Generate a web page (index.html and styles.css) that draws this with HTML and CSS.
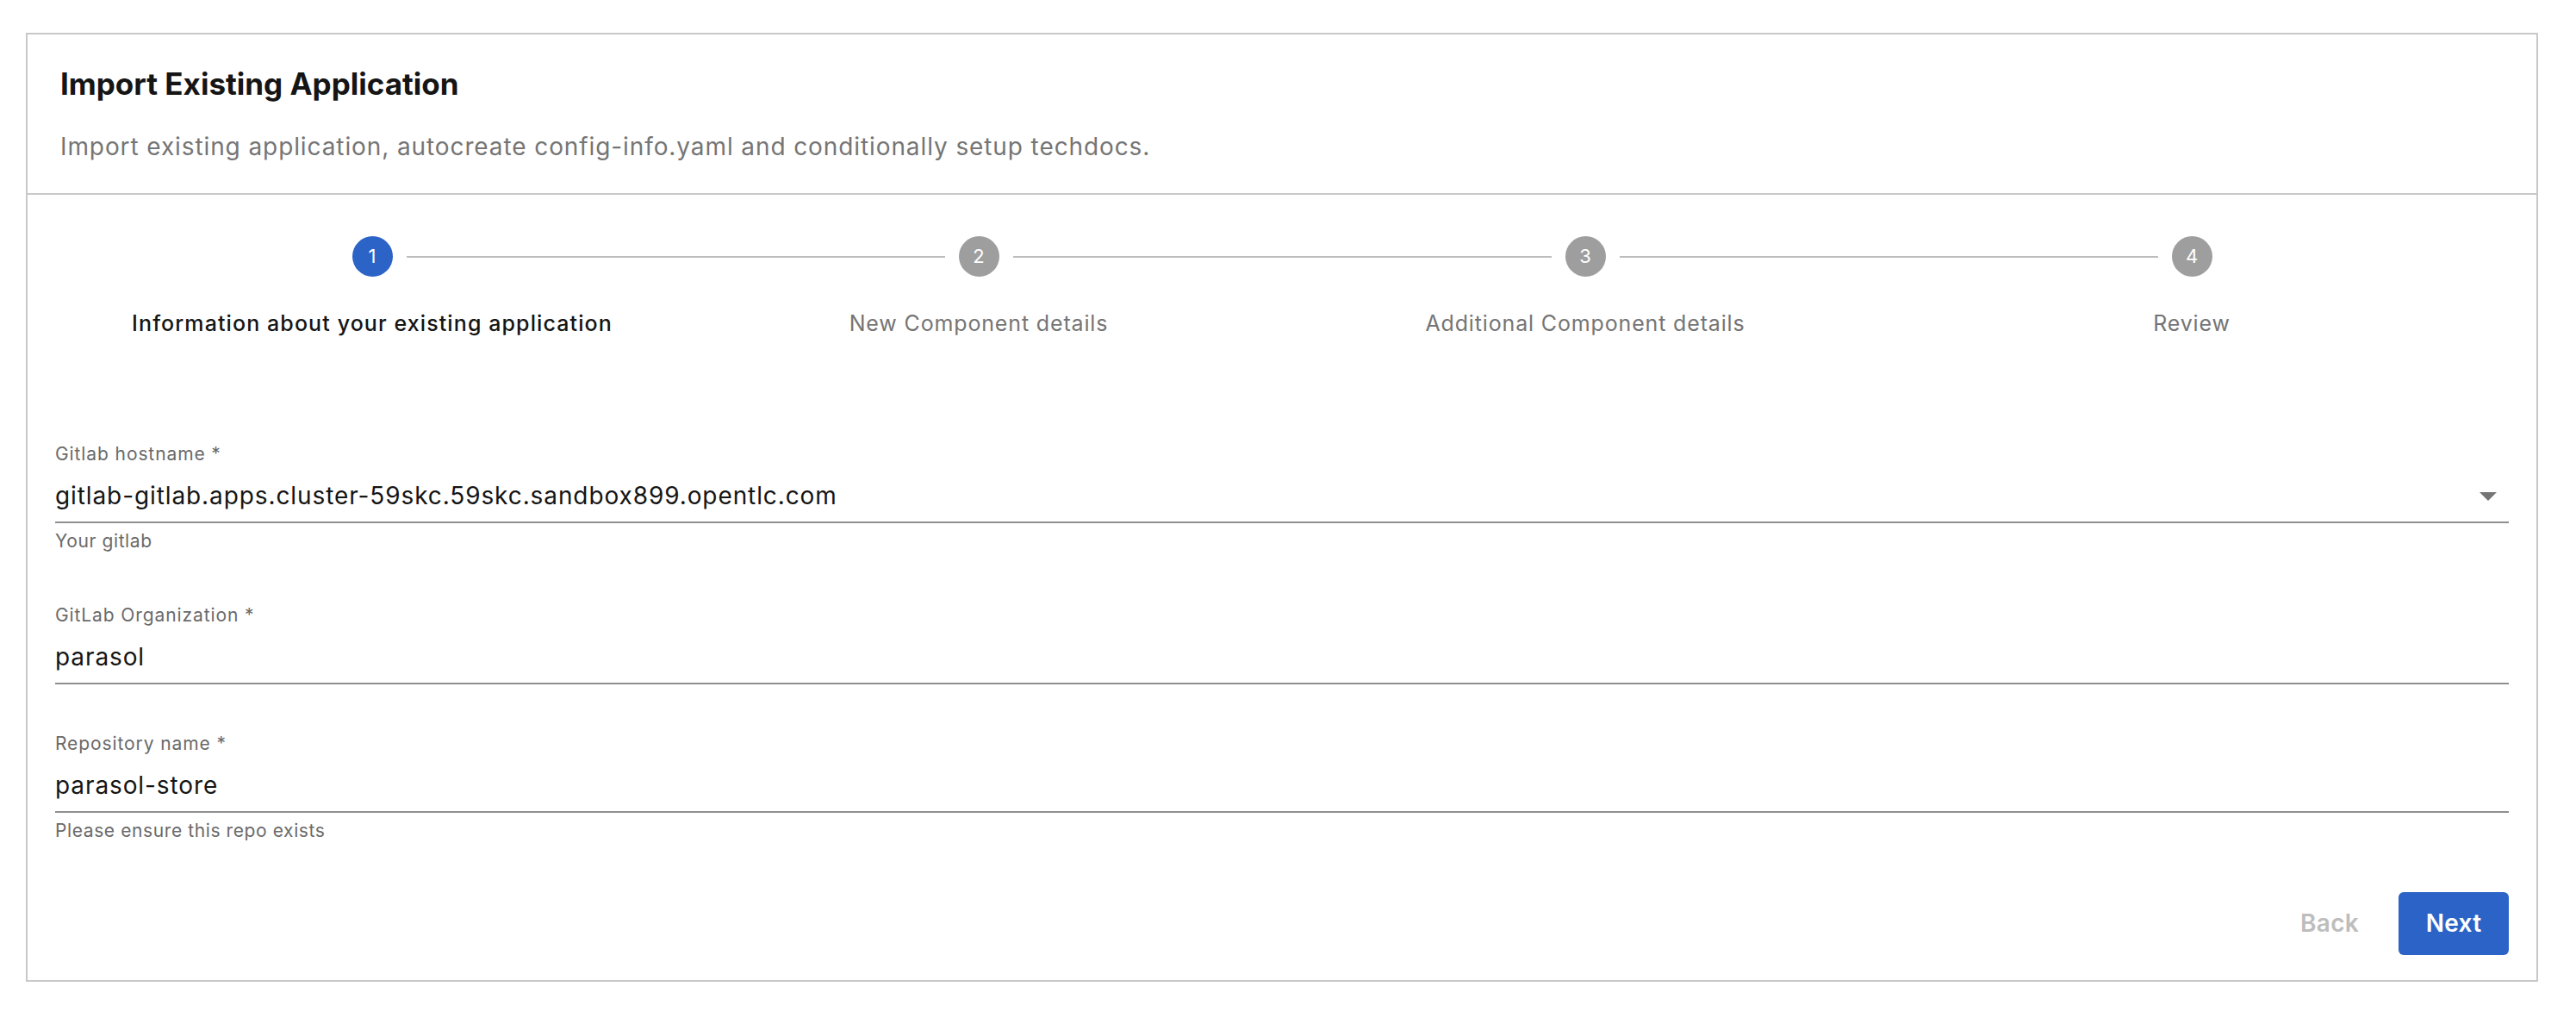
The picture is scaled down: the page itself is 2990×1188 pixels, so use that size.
FILE: index.html
```html
<!DOCTYPE html>
<html lang="en">
<head>
<meta charset="utf-8">
<title>Import Existing Application</title>
<link rel="stylesheet" href="styles.css">
</head>
<body>
<div class="card">
  <header class="card-header">
    <h1 class="title">Import Existing Application</h1>
    <p class="subtitle">Import existing application, autocreate config-info.yaml and conditionally setup techdocs.</p>
  </header>
  <div class="card-body">
    <ol class="stepper">
      <li class="step active">
        <div class="step-top">
          <span class="line hidden"></span>
          <span class="circle">1</span>
          <span class="line"></span>
        </div>
        <span class="step-label">Information about your existing application</span>
      </li>
      <li class="step">
        <div class="step-top">
          <span class="line"></span>
          <span class="circle">2</span>
          <span class="line"></span>
        </div>
        <span class="step-label">New Component details</span>
      </li>
      <li class="step">
        <div class="step-top">
          <span class="line"></span>
          <span class="circle">3</span>
          <span class="line"></span>
        </div>
        <span class="step-label">Additional Component details</span>
      </li>
      <li class="step">
        <div class="step-top">
          <span class="line"></span>
          <span class="circle">4</span>
          <span class="line hidden"></span>
        </div>
        <span class="step-label">Review</span>
      </li>
    </ol>

    <form class="form">
      <div class="field">
        <label class="field-label">Gitlab hostname *</label>
        <div class="field-input select">
          <span class="value">gitlab-gitlab.apps.cluster-59skc.59skc.sandbox899.opentlc.com</span>
          <svg class="caret" width="20" height="10" viewBox="0 0 20 10"><path d="M0 0 L20 0 L10 10 Z" fill="#757575"/></svg>
        </div>
        <p class="helper">Your gitlab</p>
      </div>
      <div class="field">
        <label class="field-label">GitLab Organization *</label>
        <div class="field-input">
          <span class="value">parasol</span>
        </div>
      </div>
      <div class="field">
        <label class="field-label">Repository name *</label>
        <div class="field-input">
          <span class="value">parasol-store</span>
        </div>
        <p class="helper">Please ensure this repo exists</p>
      </div>
      <div class="actions">
        <button type="button" class="btn btn-back" disabled>Back</button>
        <button type="button" class="btn btn-next">Next</button>
      </div>
    </form>
  </div>
</div>
</body>
</html>
```

FILE: styles.css
```css
* {
  box-sizing: border-box;
}

html, body {
  background: #ffffff;
}

body {
  margin: 0;
  padding: 38px 44px 0 30px;
  font-family: Inter, "Open Sans", "Liberation Sans", sans-serif;
  color: #151515;
}

.card {
  border: 2px solid #c8c8c8;
  background: #ffffff;
}

.card-header {
  padding: 35px 38px 36px;
  border-bottom: 2px solid #c8c8c8;
}

.title {
  margin: 0;
  font-size: 35px;
  line-height: 44px;
  font-weight: 700;
  color: #151515;
  letter-spacing: 0;
}

.subtitle {
  margin: 33px 0 0;
  font-size: 28px;
  line-height: 36px;
  font-weight: 400;
  color: #757575;
  letter-spacing: 0.9px;
}

.card-body {
  padding: 48px 32px 29px;
}

.stepper {
  list-style: none;
  margin: 0;
  padding: 0 16px;
  display: grid;
  grid-template-columns: repeat(4, 1fr);
}

.step {
  display: flex;
  flex-direction: column;
  align-items: center;
}

.step-top {
  display: flex;
  align-items: center;
  width: 100%;
}

.line {
  flex: 1;
  height: 2px;
  background: #bdbdbd;
}

.line:first-child {
  margin-right: 16px;
}

.line:last-child {
  margin-left: 16px;
}

.line.hidden {
  background: transparent;
}

.circle {
  width: 47px;
  height: 47px;
  border-radius: 50%;
  background: #9e9e9e;
  color: #ffffff;
  font-size: 22px;
  line-height: 47px;
  text-align: center;
  font-weight: 400;
}

.step.active .circle {
  background: #2b64c6;
}

.step-label {
  margin-top: 37px;
  font-size: 25px;
  line-height: 34px;
  color: #757575;
  font-weight: 400;
  letter-spacing: 0.85px;
  white-space: nowrap;
}

.step.active .step-label {
  color: #151515;
  font-weight: 500;
  letter-spacing: 1.1px;
}

.form {
  margin-top: 120px;
  display: flex;
  flex-direction: column;
  gap: 54px;
}

.field {
  display: flex;
  flex-direction: column;
}

.field-label {
  font-size: 21px;
  line-height: 30px;
  color: #6a6a6a;
  letter-spacing: 0.9px;
}

.field-input {
  margin-top: 14px;
  display: flex;
  align-items: center;
  padding-bottom: 11px;
  border-bottom: 2px solid #8f8f8f;
}

.value {
  flex: 1;
  font-size: 28px;
  line-height: 38px;
  color: #151515;
  letter-spacing: 0.9px;
}

.caret {
  margin-right: 14px;
  margin-top: 2px;
}

.helper {
  margin: 4px 0 0;
  font-size: 21px;
  line-height: 34px;
  color: #6a6a6a;
  letter-spacing: 0.6px;
}

.actions {
  margin-top: 0;
  display: flex;
  justify-content: flex-end;
  gap: 16px;
}

.btn {
  font-family: inherit;
  font-size: 28px;
  font-weight: 600;
  line-height: 43px;
  padding: 15px 0;
  width: 128px;
  border: none;
  border-radius: 6px;
  cursor: pointer;
  letter-spacing: 0.3px;
}

.btn-back {
  background: transparent;
  color: #bdbdbd;
}

.btn-next {
  background: #2b64c6;
  color: #ffffff;
}
```
